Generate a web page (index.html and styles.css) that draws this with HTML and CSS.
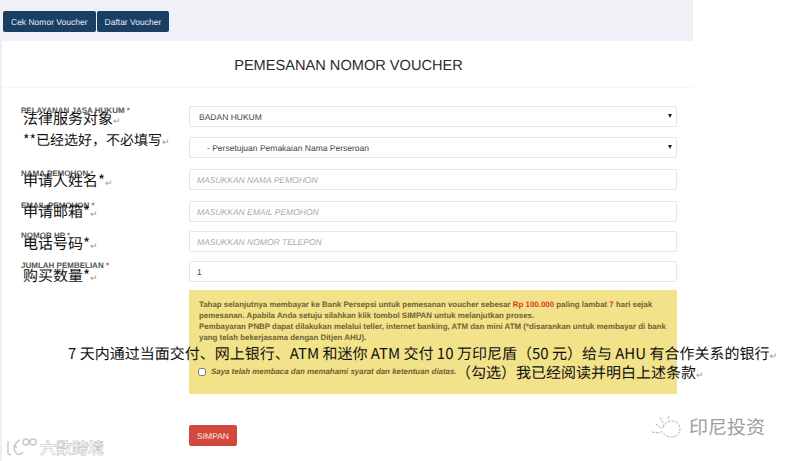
FILE: index.html
```html
<!DOCTYPE html>
<html lang="id">
<head>
    <meta charset="UTF-8">
    <title>Pemesanan Nomor Voucher</title>
    <link rel="stylesheet" href="styles.css">
</head>
<body>
<div class="page">
    <div class="topbar">
        <button class="btn-nav" type="button">Cek Nomor Voucher</button>
        <button class="btn-nav" type="button">Daftar Voucher</button>
    </div>

    <div class="panel">
        <h1 class="panel-title">PEMESANAN NOMOR VOUCHER</h1>

        <form class="voucher-form">
            <div class="row">
                <label class="field-label">PELAYANAN JASA HUKUM <span class="req">*</span></label>
                <div class="select-wrap">
                    <select><option>BADAN HUKUM</option></select>
                </div>
                <span class="note note-service">法律服务对象<i class="ret">↵</i></span>
                <span class="note note-selected">**已经选好，不必填写<i class="ret">↵</i></span>
            </div>
            <div class="row row-wide">
                <div></div>
                <div class="select-wrap">
                    <select class="indent"><option>- Persetujuan Pemakaian Nama Perseroan</option></select>
                </div>
            </div>
            <div class="row row-wide">
                <label class="field-label">NAMA PEMOHON <span class="req">*</span></label>
                <input type="text" placeholder="MASUKKAN NAMA PEMOHON">
                <span class="note note-name">申请人姓名*<i class="ret">↵</i></span>
            </div>
            <div class="row row-tight">
                <label class="field-label">EMAIL PEMOHON <span class="req">*</span></label>
                <input type="text" placeholder="MASUKKAN EMAIL PEMOHON">
                <span class="note note-mail">申请邮箱*<i class="ret">↵</i></span>
            </div>
            <div class="row row-tight">
                <label class="field-label">NOMOR HP <span class="req">*</span></label>
                <input type="text" placeholder="MASUKKAN NOMOR TELEPON">
                <span class="note note-phone">电话号码*<i class="ret">↵</i></span>
            </div>
            <div class="row row-last">
                <label class="field-label">JUMLAH PEMBELIAN <span class="req">*</span></label>
                <input type="text" value="1">
                <span class="note note-qty">购买数量*<i class="ret">↵</i></span>
            </div>

            <div class="row row-notice">
                <div></div>
                <div class="notice">
                    <p>Tahap selanjutnya membayar ke Bank Persepsi untuk pemesanan voucher sebesar <b class="red">Rp 100.000</b> paling lambat <b class="red">7</b> hari sejak pemesanan. Apabila Anda setuju silahkan klik tombol SIMPAN untuk melanjutkan proses.<br>
                    Pembayaran PNBP dapat dilakukan melalui teller, internet banking, ATM dan mini ATM (*disarankan untuk membayar di bank yang telah bekerjasama dengan Ditjen AHU).</p>
                    <label class="agree"><input type="checkbox"> Saya telah membaca dan memahami syarat dan ketentuan diatas.</label>
                </div>
            </div>

            <div class="row row-submit">
                <div></div>
                <div><button class="btn-save" type="button">SIMPAN</button></div>
            </div>
        </form>
    </div>

    <div class="note-long note-pay">7 天内通过当面交付、网上银行、ATM 和迷你 ATM 交付 10 万印尼盾（50 元）给与 AHU 有合作关系的银行<i class="ret">↵</i></div>
    <div class="note-long note-agree">（勾选）我已经阅读并明白上述条款<i class="ret">↵</i></div>

    <div class="mark mark-left">
        <svg width="32" height="20" viewBox="0 0 32 20" fill="none" stroke="#c9c9c9" stroke-width="1.5">
            <path d="M2 4v12c0 2 2 2 3 1M14 3c-6 3-7 9-4 13 2 2 5 2 7-1M7 9l4 1"/>
            <circle cx="20" cy="5" r="3"/>
            <circle cx="27" cy="5" r="3"/>
        </svg>
        <span>六数跨境</span>
    </div>
    <div class="mark mark-right">
        <svg width="32" height="24" viewBox="0 0 32 24" fill="none" stroke="#b5b5b5" stroke-width="1" stroke-dasharray="3 1">
            <path d="M12 13c1-5 5-7 9-7 5 0 8 4 8 8 0 5-4 8-9 8-4 0-7-2-8-5"/>
            <path d="M1 17l8 1 3-3M5 9l6 5M9 2l4 8M18 1l-1 4"/>
        </svg>
        <span>印尼投资</span>
    </div>
</div>
</body>
</html>
```

FILE: styles.css
```css
* {
    box-sizing: border-box;
}

body {
    margin: 0;
    background-color: #fff;
    font-family: "Liberation Sans", Arial, sans-serif;
    text-rendering: geometricPrecision;
}

.page {
    position: relative;
    width: 789px;
    height: 461px;
    overflow: hidden;
}

.topbar {
    display: flex;
    gap: 1px;
    width: 693px;
    height: 41px;
    padding: 11px 0 0 3px;
    background-color: #f0f1f6;
}

.btn-nav {
    height: 21px;
    padding: 0 8px;
    background-color: #1b3e65;
    color: #e8edf2;
    border: none;
    border-radius: 2px;
    font-family: inherit;
    font-size: 8.5px;
    text-rendering: inherit;
}

.panel {
    width: 693px;
    height: 420px;
    border-left: 2px solid #eeeff3;
}

.panel-title {
    height: 47px;
    margin: 0;
    padding: 17px 0 0 2px;
    border-bottom: 1px solid #f6f6f8;
    text-align: center;
    font-size: 14.6px;
    line-height: 17px;
    font-weight: normal;
    color: #2b2b2b;
}

.voucher-form {
    padding: 18px 14px 0 19px;
}

.row {
    position: relative;
    display: grid;
    grid-template-columns: 168px 488px;
    height: 21px;
    margin-bottom: 10px;
}

.row-wide {
    margin-bottom: 11px;
}

.row-tight {
    margin-bottom: 9px;
}

.row-last {
    margin-bottom: 8px;
}

.row-notice {
    height: 104px;
    margin-bottom: 31px;
}

.field-label {
    font-size: 8px;
    line-height: 9px;
    font-weight: bold;
    color: #555;
}

.req {
    color: #d9534f;
}

.select-wrap {
    position: relative;
}

.select-wrap::after {
    content: "";
    position: absolute;
    right: 5px;
    top: 8px;
    border-left: 2.5px solid transparent;
    border-right: 2.5px solid transparent;
    border-top: 4px solid #222;
}

select,
.row input[type="text"] {
    display: block;
    width: 100%;
    height: 21px;
    background-color: #fff;
    border: 1px solid #e6e6e6;
    border-radius: 2px;
    font-family: inherit;
    font-size: 8.5px;
    color: #444;
    outline: none;
    text-rendering: inherit;
}

select {
    appearance: none;
    padding-left: 9px;
}

select.indent {
    padding-left: 17px;
}

.row input[type="text"] {
    padding-left: 7px;
}

.row input::placeholder {
    font-style: italic;
    color: #a9a9a9;
}

.notice {
    height: 104px;
    padding: 9px 8px 0 10px;
    background-color: #f2e28a;
    font-size: 7.9px;
    line-height: 11px;
    font-weight: bold;
    color: #6f6233;
}

.notice p {
    margin: 0;
}

.red {
    color: #d9382a;
}

.agree {
    display: flex;
    align-items: center;
    gap: 5px;
    margin-top: 23px;
    font-style: italic;
    color: #6d6132;
}

.agree input {
    width: 8px;
    height: 8px;
    margin: 1px 0 0 -1px;
}

.btn-save {
    width: 48px;
    height: 21px;
    padding: 0;
    background-color: #d2493c;
    color: #fbe9e6;
    border: none;
    border-radius: 2px;
    font-family: inherit;
    font-size: 8.5px;
    text-rendering: inherit;
}

/* chinese annotations pasted over the form */
.note,
.note-long {
    position: absolute;
    font-family: "Noto Sans CJK SC", sans-serif;
    font-size: 15px;
    line-height: 18px;
    color: #111;
    white-space: nowrap;
}

.ret {
    font-style: normal;
    font-size: 9px;
    color: #999;
}

.note-service { left: 2px; top: 4px; }
.note-selected { left: 2px; top: 25px; font-size: 14px; }
.note-name { left: 2px; top: 3px; }
.note-mail { left: 2px; top: 2px; }
.note-phone { left: 2px; top: 4px; }
.note-qty { left: 2px; top: 6px; }

.note-pay { left: 68px; top: 345px; }
.note-agree { left: 456px; top: 364px; }

.mark {
    position: absolute;
    display: flex;
    align-items: center;
    gap: 2px;
    font-family: "Noto Sans CJK SC", sans-serif;
    white-space: nowrap;
}

.mark-left {
    left: 6px;
    top: 435px;
    font-size: 16px;
    font-weight: bold;
    color: #fff;
    -webkit-text-stroke: 0.6px #c4c4c4;
}

.mark-right {
    left: 651px;
    top: 413px;
    gap: 6px;
    font-size: 19px;
    color: #9d9d9d;
}
```
